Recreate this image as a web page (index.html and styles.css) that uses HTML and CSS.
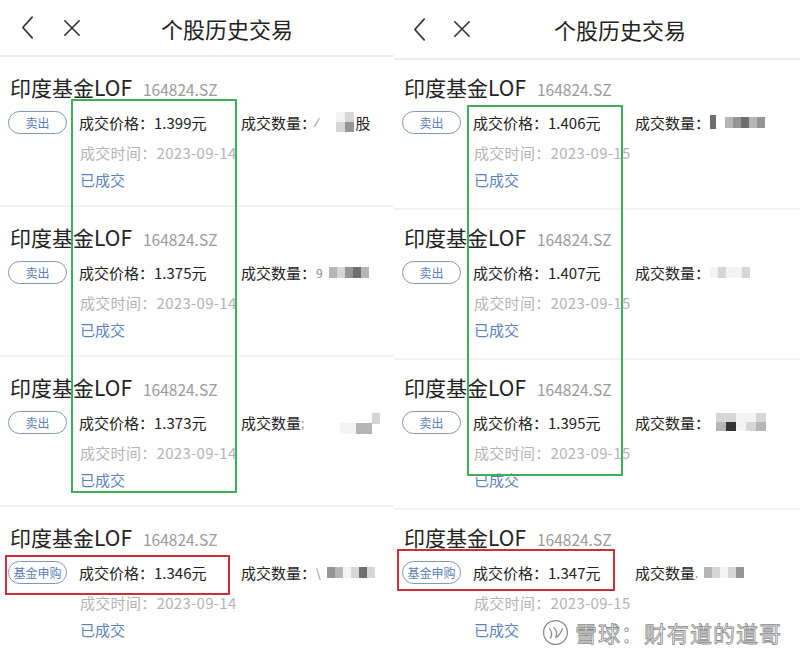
FILE: index.html
```html
<!DOCTYPE html>
<html lang="zh-CN">

<head>
    <meta charset="UTF-8">
    <title>个股历史交易</title>
    <link rel="stylesheet" href="styles.css">
</head>

<body>
    <!--左屏-->
    <div class="screen left">
        <div class="topbar">
            <svg class="ico back" viewBox="0 0 16 26"><path d="M13 2 L3 13 L13 24" /></svg>
            <svg class="ico close" viewBox="0 0 20 20"><path d="M2 2 L18 18 M18 2 L2 18" /></svg>
            <div class="title">个股历史交易</div>
        </div>

        <div class="item">
            <div class="name">印度基金LOF<span class="code">164824.SZ</span></div>
            <div class="row">
                <span class="tag">卖出</span>
                <span class="price">成交价格：1.399元</span>
                <span class="qty">成交数量：<span class="frag">⁄</span><span class="mosaic tall"><i class="g0"></i><i class="g1"></i><i class="g1"></i><i class="g3"></i></span>股</span>
            </div>
            <div class="time">成交时间：2023-09-14</div>
            <div class="status">已成交</div>
        </div>

        <div class="item">
            <div class="name">印度基金LOF<span class="code">164824.SZ</span></div>
            <div class="row">
                <span class="tag">卖出</span>
                <span class="price">成交价格：1.375元</span>
                <span class="qty">成交数量：<span class="frag">9</span><span class="mosaic"><i class="g2"></i><i class="g1"></i><i class="g3"></i><i class="g4"></i><i class="g2"></i></span></span>
            </div>
            <div class="time">成交时间：2023-09-14</div>
            <div class="status">已成交</div>
        </div>

        <div class="item">
            <div class="name">印度基金LOF<span class="code">164824.SZ</span></div>
            <div class="row">
                <span class="tag">卖出</span>
                <span class="price">成交价格：1.373元</span>
                <span class="qty">成交数量<span class="frag">;</span><span class="mosaic low"><i class="g0"></i><i class="g0"></i><i class="g2"></i><i class="g2"></i><i class="g1 up"></i></span></span>
            </div>
            <div class="time">成交时间：2023-09-14</div>
            <div class="status">已成交</div>
        </div>

        <div class="item">
            <div class="name">印度基金LOF<span class="code">164824.SZ</span></div>
            <div class="row">
                <span class="tag">基金申购</span>
                <span class="price">成交价格：1.346元</span>
                <span class="qty">成交数量：<span class="frag">\</span><span class="mosaic"><i class="g3"></i><i class="g2"></i><i class="g0"></i><i class="g1"></i><i class="g4"></i><i class="g1"></i></span></span>
            </div>
            <div class="time">成交时间：2023-09-14</div>
            <div class="status">已成交</div>
        </div>

        <!--标注框-->
        <div class="mark green"></div>
        <div class="mark red"></div>
    </div>

    <!--右屏-->
    <div class="screen right">
        <div class="topbar">
            <svg class="ico back" viewBox="0 0 16 26"><path d="M13 2 L3 13 L13 24" /></svg>
            <svg class="ico close" viewBox="0 0 20 20"><path d="M2 2 L18 18 M18 2 L2 18" /></svg>
            <div class="title">个股历史交易</div>
        </div>

        <div class="item">
            <div class="name">印度基金LOF<span class="code">164824.SZ</span></div>
            <div class="row">
                <span class="tag">卖出</span>
                <span class="price">成交价格：1.406元</span>
                <span class="qty">成交数量：<span class="mosaic"><i class="g4 thin"></i><i class="g2"></i><i class="g3"></i><i class="g4"></i><i class="g2"></i><i class="g3"></i></span></span>
            </div>
            <div class="time">成交时间：2023-09-15</div>
            <div class="status">已成交</div>
        </div>

        <div class="item">
            <div class="name">印度基金LOF<span class="code">164824.SZ</span></div>
            <div class="row">
                <span class="tag">卖出</span>
                <span class="price">成交价格：1.407元</span>
                <span class="qty">成交数量：<span class="mosaic"><i class="g0"></i><i class="g1"></i><i class="g0"></i><i class="g0"></i><i class="g1"></i></span></span>
            </div>
            <div class="time">成交时间：2023-09-15</div>
            <div class="status">已成交</div>
        </div>

        <div class="item">
            <div class="name">印度基金LOF<span class="code">164824.SZ</span></div>
            <div class="row">
                <span class="tag">卖出</span>
                <span class="price">成交价格：1.395元</span>
                <span class="qty">成交数量：<span class="mosaic two"><i class="g1"></i><i class="g1"></i><i class="g0"></i><i class="g0"></i><i class="g1"></i><i class="g2"></i><i class="g5"></i><i class="g0"></i><i class="g1"></i><i class="g2"></i></span></span>
            </div>
            <div class="time">成交时间：2023-09-15</div>
            <div class="status">已成交</div>
        </div>

        <div class="item">
            <div class="name">印度基金LOF<span class="code">164824.SZ</span></div>
            <div class="row">
                <span class="tag">基金申购</span>
                <span class="price">成交价格：1.347元</span>
                <span class="qty">成交数量<span class="frag">.</span><span class="mosaic"><i class="g2"></i><i class="g1"></i><i class="g0"></i><i class="g1"></i><i class="g3"></i></span></span>
            </div>
            <div class="time">成交时间：2023-09-15</div>
            <div class="status">已成交</div>
        </div>

        <div class="mark green"></div>
        <div class="mark red"></div>

        <!--水印-->
        <div class="watermark">
            <svg class="wm-logo" viewBox="0 0 26 26"><circle cx="13" cy="13" r="11.5" /><path d="M7 9 Q11 13 8 19 M11 8 Q16 12 13 18 M14 18 Q18 14 20 9" /></svg>
            <span>雪球：财有道的道哥</span>
        </div>
    </div>
</body>

</html>
```

FILE: styles.css
```css
html,
body {
    margin: 0;
    padding: 0;
    width: 800px;
    height: 654px;
    overflow: hidden;
    background: #fff;
}

body {
    display: flex;
    font-family: "Noto Sans CJK SC", "Noto Sans", sans-serif;
    color: #222;
}

.screen {
    position: relative;
    height: 654px;
}

.screen.left {
    width: 394px;
}

.screen.right {
    width: 406px;
}

/*顶栏*/
.topbar {
    height: 55px;
    border-bottom: 2px solid #eeeeee;
    display: flex;
    align-items: center;
    padding-left: 20px;
}

.right .topbar {
    height: 58px;
    padding-left: 18px;
}

.ico {
    fill: none;
    stroke: #333;
    stroke-width: 1.8;
    stroke-linecap: round;
    stroke-linejoin: round;
}

.back {
    width: 15px;
    height: 25px;
}

.close {
    width: 18px;
    height: 18px;
    margin-left: 28px;
}

.right .close {
    margin-left: 26px;
}

.title {
    font-size: 22px;
    margin-left: 80px;
}

.right .title {
    margin-left: 83px;
}

/*列表*/
.item {
    padding: 16px 0 12px 10px;
    border-bottom: 2px solid #f2f2f2;
}

.right .item {
    padding-top: 13px;
    padding-bottom: 15px;
}

.name {
    font-size: 21px;
    line-height: 28px;
}

.code {
    font-size: 15.5px;
    color: #9a9a9a;
    margin-left: 11px;
}

.row {
    display: flex;
    align-items: center;
    height: 24px;
    margin-top: 7px;
    font-size: 15px;
    margin-left: -2px;
}

.tag {
    width: 57px;
    height: 21px;
    border: 1.5px solid #7f97bd;
    border-radius: 12px;
    color: #5a7fb8;
    font-size: 12px;
    display: flex;
    align-items: center;
    justify-content: center;
    flex-shrink: 0;
}

.price {
    margin-left: 12px;
    width: 162px;
}

.qty {
    display: flex;
    align-items: center;
    white-space: nowrap;
}

.frag {
    color: #888;
    font-size: 12px;
    margin-right: 6px;
}

.mosaic {
    display: flex;
    align-items: center;
    margin-right: 2px;
}

.mosaic i {
    width: 8px;
    height: 11px;
    display: block;
}

.mosaic i.thin {
    width: 6px;
    height: 14px;
    margin-right: 9px;
}

.mosaic.tall {
    flex-wrap: wrap;
    width: 18px;
    margin-left: 12px;
}

.mosaic.tall i {
    width: 9px;
    height: 10px;
}

.mosaic.low {
    margin-top: 12px;
    margin-left: 30px;
}

.mosaic.low i.up {
    margin-top: -20px;
}

.mosaic.two {
    flex-wrap: wrap;
    width: 50px;
    margin-left: 6px;
}

.mosaic.two i {
    width: 10px;
    height: 9px;
}

.g0 { background: #f3f3f3; }
.g1 { background: #d6d6d6; }
.g2 { background: #b5b5b5; }
.g3 { background: #959595; }
.g4 { background: #6e6e6e; }
.g5 { background: #333; }

.time {
    margin-top: 5px;
    margin-left: 70px;
    font-size: 15px;
    line-height: 28px;
    color: #b4b4b4;
    letter-spacing: 0.3px;
}

.status {
    margin-left: 70px;
    font-size: 15px;
    line-height: 26px;
    color: #5b83c0;
}

/*标注*/
.mark {
    position: absolute;
    box-sizing: border-box;
    border: 2px solid #3fae5c;
}

.left .mark.green {
    left: 71px;
    top: 99px;
    width: 166px;
    height: 394px;
}

.left .mark.red {
    border-color: #c8303a;
    left: 5px;
    top: 555px;
    width: 225px;
    height: 40px;
}

.right .mark.green {
    left: 73px;
    top: 105px;
    width: 156px;
    height: 371px;
}

.right .mark.red {
    border-color: #c8303a;
    left: 3px;
    top: 549px;
    width: 218px;
    height: 42px;
}

/*水印*/
.watermark {
    position: absolute;
    left: 148px;
    top: 616px;
    display: flex;
    align-items: center;
    font-size: 22px;
    color: #fff;
    -webkit-text-stroke: 0.8px #8a8a8a;
    letter-spacing: 1px;
}

.wm-logo {
    width: 27px;
    height: 27px;
    margin-right: 6px;
    fill: #fff;
    stroke: #8a8a8a;
    stroke-width: 1.2;
}
```
